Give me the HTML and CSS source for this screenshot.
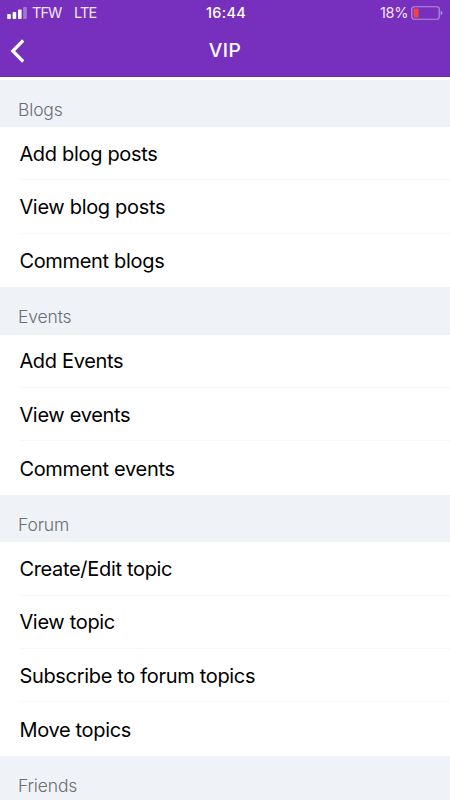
FILE: index.html
```
<!DOCTYPE html>
<html lang="en">
<head>
<meta charset="utf-8">
<title>VIP</title>
<link rel="stylesheet" href="styles.css">
</head>
<body>
<header class="header">
  <div class="status">
    <div class="carrier">
      <svg width="20" height="12" viewBox="0 0 20 12" fill="#fff"><rect x=".2" y="7" width="3.6" height="5" rx=".8"/><rect x="5.600" y="5" width="3.600" height="7" rx=".8"/><rect x="11" y="2.500" width="3.600" height="9.500" rx=".8"/><rect x="16.200" y="0" width="3.600" height="12" rx=".8" opacity=".35"/></svg>
      <span class="name">TFW</span><span class="network">LTE</span>
    </div>
    <div class="clock">16:44</div>
    <div class="power">
      <span class="percent">18%</span>
      <svg width="32" height="14" viewBox="0 0 32 14"><rect x=".75" y=".75" width="27.500" height="12.500" rx="2.500" fill="none" stroke="#fff" stroke-opacity=".45" stroke-width="1.200"/><rect x="2.500" y="2.500" width="5" height="9" rx=".8" fill="#f24343"/><path d="M29.700 4.700q1.800.8 1.800 2.300t-1.800 2.300z" fill="#fff" opacity=".5"/></svg>
    </div>
  </div>
  <nav class="nav">
    <svg class="back" width="14" height="24" viewBox="0 0 14 24"><path d="M13.200 1.500L2.800 12l10.400 10.500" fill="none" stroke="#fff" stroke-width="3.200"/></svg>
    <h1 class="title">VIP</h1>
  </nav>
</header>
<main>
  <h2 class="section">Blogs</h2>
  <ul class="list"><li><span>Add blog posts</span></li><li><span>View blog posts</span></li><li><span>Comment blogs</span></li></ul>
  <h2 class="section">Events</h2>
  <ul class="list"><li><span>Add Events</span></li><li><span>View events</span></li><li><span>Comment events</span></li></ul>
  <h2 class="section">Forum</h2>
  <ul class="list"><li><span>Create/Edit topic</span></li><li><span>View topic</span></li><li><span>Subscribe to forum topics</span></li><li><span>Move topics</span></li></ul>
  <h2 class="section">Friends</h2>
</main>
</body>
</html>
```
FILE: styles.css
```
* { box-sizing: border-box; }
body { margin: 0; height: 800px; overflow: hidden; background: #fff; color: #000; font-family: Inter, sans-serif; }
.header { height: 77px; background: #7630bd; border-bottom: 1px solid #66309c; color: #fff; }
.status { height: 25px; display: grid; grid-template-columns: 1fr auto 1fr; align-items: center; padding: 0 7px; font-size: 14.5px; }
.carrier, .power { display: flex; align-items: center; color: #f7e4ff; }
.carrier { letter-spacing: -0.9px; }
.name { margin-left: 5px; }
.network { margin-left: 12.5px; }
.clock { font-weight: 500; font-size: 14.5px; letter-spacing: 0.3px; padding-left: 2px; }
.power { justify-content: flex-end; gap: 4px; letter-spacing: -0.4px; }
.percent { position: relative; left: 1px; }
.nav { height: 50px; display: grid; grid-template-columns: 1fr auto 1fr; align-items: center; padding: 0 10px; }
.back { margin-top: 2px; }
.title { margin: 0; font-size: 19.2px; font-weight: 550; letter-spacing: 0.4px; }
main { padding-top: 2.6px; }
.section { margin: 0; height: 47.5px; padding: 20px 18px 0; background: #eff3f8; color: #6d6d72; font-size: 17.5px; font-weight: 350; line-height: 20px; letter-spacing: -0.15px; }
.list { list-style: none; margin: 0; padding: 0 0 0 19.4px; }
.list li { height: 53.35px; display: flex; align-items: center; padding-top: 1.4px; border-bottom: 1px solid #f8f8f9; font-size: 20px; letter-spacing: -0.32px; }
.list li:last-child { border-bottom: 0; }
```
